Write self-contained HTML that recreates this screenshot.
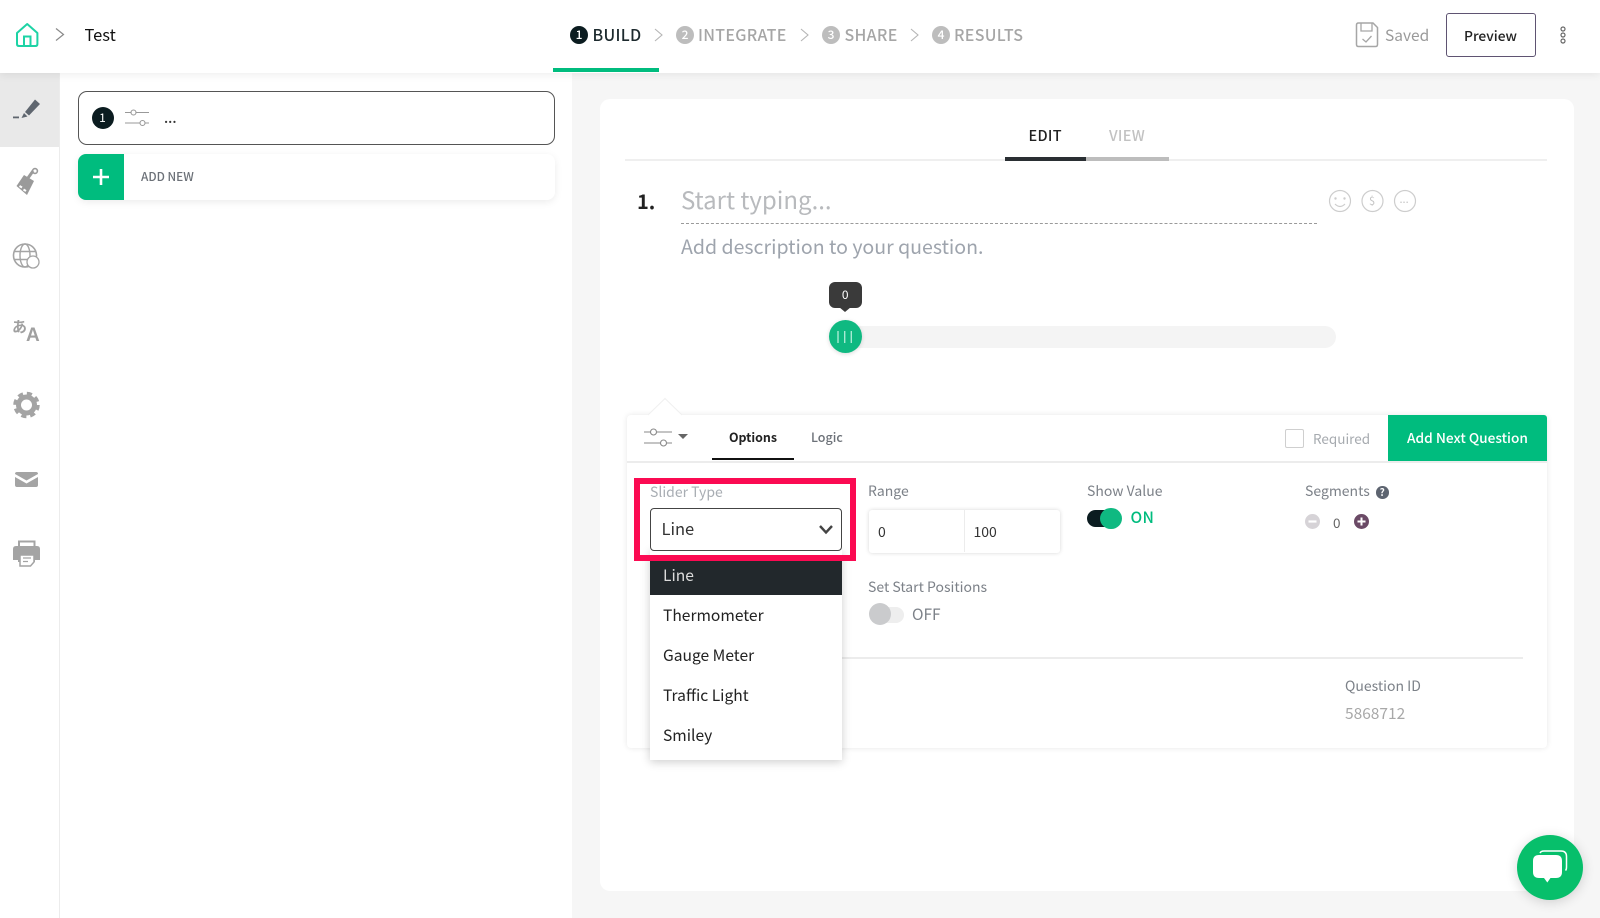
<!DOCTYPE html>
<html lang="en"><head><meta charset="utf-8"><title>Test</title>
<style>
html,body{margin:0;padding:0;width:1600px;height:918px;overflow:hidden;background:#f6f6f6;}
body{position:relative;font-family:"Noto Sans CJK JP","Liberation Sans",sans-serif;color:#222;}
.a{position:absolute;box-sizing:border-box;}
.t{position:absolute;white-space:nowrap;line-height:24px;height:24px;margin-top:-12px;}
svg{position:absolute;overflow:visible;}
.c{position:absolute;border-radius:50%;text-align:center;color:#fff;font-size:12px;font-weight:500;}
.n{font-size:16px;font-weight:500;letter-spacing:.3px;color:#a6a6a6;}
.l{font-size:14px;color:#7c8188;}
.o{font-size:15.600px;color:#222;}
</style></head><body>
<!-- panels -->
<div class="a" style="left:0;top:73px;width:572px;height:845px;background:#fff;"></div>
<div class="a" style="left:59px;top:73px;width:1px;height:845px;background:#ececec;"></div>
<div class="a" style="left:0;top:73px;width:59px;height:74px;background:#e9e9e9;"></div>
<!-- header -->
<div class="a" style="left:0;top:0;width:1600px;height:73px;background:#fff;box-shadow:0 2px 8px rgba(0,0,0,.07);"></div>
<svg style="left:0;top:0" width="70" height="60" viewBox="0 0 70 60" fill="none">
<path d="M17 33 L27.200 24 L37.400 33 V44 Q37.400 46 35.400 46 H19 Q17 46 17 44 Z" stroke="#1dd3a5" stroke-width="2" stroke-linejoin="round"/>
<path d="M24 46 V36.500 H30.500 V46" stroke="#1dd3a5" stroke-width="2"/>
<path d="M56 28.500 L63.500 34.500 L56 40.500" stroke="#8a8a8a" stroke-width="1.200"/>
</svg>
<div class="t" style="left:84.500px;top:34px;font-size:16.500px;color:#111;">Test</div>
<div class="a" style="left:553px;top:68px;width:106px;height:4px;background:#00bc7e;"></div>
<div class="c" style="left:570px;top:26px;width:18px;height:18px;line-height:17px;background:#0b1c20;">1</div>
<div class="t n" style="left:592.500px;top:34px;color:#1d2a2e;">BUILD</div>
<div class="c" style="left:676px;top:26px;width:18px;height:18px;line-height:17px;background:#bdbdbd;">2</div>
<div class="t n" style="left:698px;top:34px;">INTEGRATE</div>
<div class="c" style="left:822px;top:26px;width:18px;height:18px;line-height:17px;background:#bdbdbd;">3</div>
<div class="t n" style="left:844.500px;top:34px;">SHARE</div>
<div class="c" style="left:932px;top:26px;width:18px;height:18px;line-height:17px;background:#bdbdbd;">4</div>
<div class="t n" style="left:954px;top:34px;">RESULTS</div>
<svg style="left:0;top:0" width="1600" height="70" fill="none" stroke="#b5b5b5" stroke-width="1.100">
<path d="M655 29 L662 35 L655 41"/><path d="M801 29 L808 35 L801 41"/><path d="M911 29 L918 35 L911 41"/>
<path d="M1356.500 25 Q1356.500 23 1358.500 23 H1373 L1377.500 27.500 V44.500 Q1377.500 46.500 1375.500 46.500 H1358.500 Q1356.500 46.500 1356.500 44.500 Z" stroke="#a6a6a6" stroke-width="1.500"/>
<path d="M1361 23 V31 H1372 V23" stroke="#a6a6a6" stroke-width="1.300"/>
<path d="M1362.500 39 L1366 42 L1371.500 36" stroke="#a6a6a6" stroke-width="1.300"/>
<circle cx="1563" cy="29" r="2" stroke="#666" stroke-width="1.200"/><circle cx="1563" cy="35" r="2" stroke="#666" stroke-width="1.200"/><circle cx="1563" cy="41" r="2" stroke="#666" stroke-width="1.200"/>
</svg>
<div class="t" style="left:1385px;top:34.500px;font-size:15.500px;color:#9a9a9a;">Saved</div>
<div class="a" style="left:1445.500px;top:13px;width:90px;height:44px;border:1.500px solid #5f5472;border-radius:3px;background:#fff;text-align:center;font-size:13.800px;font-weight:500;line-height:42.500px;color:#222;">Preview</div>

<!-- sidebar icons -->
<svg style="left:0;top:73px" width="60" height="520" viewBox="0 73 60 520" fill="none">
<path d="M13 116.500 h6 v1.800 h-6z" fill="#5f666f"/><path d="M21.500 118 L24 113 L27.500 116.500 Z" fill="#5f666f"/>
<path d="M25 112 L35 99.500 L40 104 L29 115.500 Z" fill="#5f666f"/>
<path d="M16.500 186 L24 175 L34 181 L27 195 Z" fill="#9a9a9a"/>
<path d="M19.500 186 L22 187.500 M23.500 189.500 l2.500 1.500" stroke="#fff" stroke-width="2"/>
<path d="M28 178 L33 171" stroke="#9a9a9a" stroke-width="3"/><circle cx="35" cy="171" r="2.400" stroke="#9a9a9a" stroke-width="1.600"/>
<circle cx="25" cy="255.500" r="11.500" stroke="#a4a4a4" stroke-width="1.600"/><ellipse cx="25" cy="255.500" rx="5" ry="11.500" stroke="#a4a4a4" stroke-width="1.400"/>
<path d="M14 251.500 H36 M14 259.500 H36" stroke="#a4a4a4" stroke-width="1.400"/>
<circle cx="33" cy="262" r="6" fill="#fff" stroke="#a4a4a4" stroke-width="1.300"/>
<circle cx="26.500" cy="405" r="8" stroke="#a4a4a4" stroke-width="5"/>
<circle cx="26.500" cy="405" r="11" stroke="#a4a4a4" stroke-width="4.500" stroke-dasharray="4.900 3.740"/>
<path d="M15 474 Q15 472 17 472 H36 Q38 472 38 474 L26.500 480.500 Z" fill="#a4a4a4"/><path d="M15 477 L26.500 483.500 L38 477 V485 Q38 487 36 487 H17 Q15 487 15 485 Z" fill="#a4a4a4"/>
<path d="M19 547 V541.500 H34.500 V547" stroke="#a4a4a4" stroke-width="2"/>
<path d="M16 546 H37 Q40 546 40 549 V560 H35 V562 H18 V560 H13 V549 Q13 546 16 546 Z" fill="#a4a4a4"/>
<path d="M20 555 H34 V562 L30.500 566 H20 Z" fill="#fff" stroke="#a4a4a4" stroke-width="1.500"/><path d="M23 558 H31 M23 561.500 H28" stroke="#a4a4a4" stroke-width="1.300"/>
</svg>
<div class="t" style="left:12px;top:327px;font-size:15px;font-weight:700;color:#a0a0a0;">あ</div>
<div class="t" style="left:26px;top:335.500px;font-size:19px;font-weight:700;color:#a0a0a0;font-family:'Liberation Sans',sans-serif;">A</div>

<!-- left list -->
<div class="a" style="left:77.500px;top:90.500px;width:477px;height:54.500px;border:1.800px solid #555;border-radius:9px;background:#fff;"></div>
<div class="c" style="left:91.500px;top:107px;width:22px;height:22px;line-height:21px;background:#0b1c20;font-size:12px;font-weight:400;">1</div>
<svg style="left:125px;top:109px" width="26" height="18" fill="none" stroke="#999" stroke-width="1.100">
<path d="M0 3.500 H6 M11 3.500 H24 M0 14 H15 M20 14 H24"/><circle cx="8.500" cy="3.500" r="2.500"/><circle cx="17.500" cy="14" r="2.500"/>
</svg>
<div class="t" style="left:164px;top:117.500px;font-size:14px;color:#333;font-weight:500;">...</div>
<div class="a" style="left:77.500px;top:154px;width:477px;height:46px;background:#fff;border-radius:8px;box-shadow:0 2px 8px rgba(0,0,0,.08);"></div>
<div class="a" style="left:77.500px;top:154px;width:46px;height:46px;background:#00bc7e;border-radius:8px 0 0 8px;"></div>
<svg style="left:77.500px;top:154px" width="46" height="46"><path d="M23 15 V31 M15 23 H31" stroke="#fff" stroke-width="2.600"/></svg>
<div class="t" style="left:141px;top:176.500px;font-size:11.800px;font-weight:500;color:#6c7178;">ADD NEW</div>

<!-- main card -->
<div class="a" style="left:599.500px;top:99px;width:974px;height:792px;background:#fff;border-radius:10px;"></div>
<div class="t" style="left:1028.500px;top:136px;font-size:14.500px;font-weight:500;letter-spacing:.3px;color:#222;">EDIT</div>
<div class="t" style="left:1109px;top:136px;font-size:14.500px;font-weight:500;letter-spacing:.3px;color:#c2c2c2;">VIEW</div>
<div class="a" style="left:625px;top:159px;width:922px;height:1.500px;background:#efefef;"></div>
<div class="a" style="left:1004.500px;top:157px;width:81.500px;height:3.500px;background:#2a2f33;"></div>
<div class="a" style="left:1086px;top:157px;width:83px;height:3.500px;background:#bdbdbd;"></div>
<div class="t" style="left:637px;top:201px;font-size:20px;font-weight:700;color:#222;">1.</div>
<div class="t" style="left:681px;top:199px;font-size:24px;color:#b8babd;">Start typing...</div>
<div class="a" style="left:680.500px;top:223px;width:636.500px;height:0;border-top:1.500px dashed #9a9a9a;"></div>
<div class="t" style="left:681px;top:246px;font-size:19.550px;color:#9ea4ad;">Add description to your question.</div>
<svg style="left:0;top:0" width="1600" height="260" fill="none" stroke="#cdcdcd" stroke-width="1.200">
<circle cx="1340" cy="201" r="10.500"/><circle cx="1335.500" cy="198.500" r=".6" fill="#cdcdcd"/><circle cx="1344.500" cy="198.500" r=".6" fill="#cdcdcd"/><path d="M1335 204 Q1340 209 1345 204"/>
<circle cx="1372.500" cy="201" r="10.500"/><circle cx="1405" cy="201" r="10.500"/>
</svg>
<div class="t" style="left:1369px;top:200.500px;font-size:11px;color:#c4c4c4;">$</div>
<div class="t" style="left:1399.500px;top:199px;font-size:11px;color:#c4c4c4;">...</div>

<!-- slider -->
<div class="a" style="left:845px;top:326px;width:491px;height:22px;background:#f4f4f4;border-radius:0 11px 11px 0;"></div>
<div class="a" style="left:829px;top:281.500px;width:32.500px;height:26px;background:#3a3a3a;border-radius:6px;color:#fff;font-size:12px;text-align:center;line-height:25px;">0</div>
<svg style="left:839px;top:307px" width="12" height="6"><path d="M0 0 H12 L6 5 Z" fill="#3a3a3a"/></svg>
<div class="a" style="left:828.500px;top:320px;width:33px;height:33px;border-radius:50%;background:#0fb981;box-shadow:0 1px 4px rgba(0,0,0,.15);"></div>
<svg style="left:829px;top:320px" width="33" height="33"><path d="M9 11 V23 M15.700 11 V23 M22.300 11 V23" stroke="#a9ead3" stroke-width="1.400"/></svg>

<!-- options panel -->
<div class="a" style="left:627px;top:415px;width:920px;height:332.500px;background:#fff;border-radius:4px;box-shadow:0 0 6px rgba(0,0,0,.1);"></div>
<svg style="left:640px;top:396px" width="50" height="22"><path d="M7 19.500 L25 2 L43 19.500 Z" fill="#fff"/><path d="M8 19 L25 2.500 L42 19" fill="none" stroke="#f0f0f0"/></svg>
<div class="a" style="left:627px;top:461px;width:920px;height:1.500px;background:#ececec;"></div>
<svg style="left:644px;top:428px" width="46" height="20" fill="none" stroke="#888" stroke-width="1.100">
<path d="M0 4 H6 M13 4 H28 M0 15 H16 M23 15 H28"/><circle cx="9.500" cy="4" r="3"/><circle cx="19.500" cy="15" r="3"/>
<path d="M34 6 H44 L39 11 Z" fill="#666" stroke="none"/>
</svg>
<div class="t" style="left:729px;top:436.500px;font-size:12.400px;font-weight:700;color:#222;">Options</div>
<div class="a" style="left:712px;top:458px;width:82px;height:2px;background:#111;"></div>
<div class="t" style="left:811px;top:436.500px;font-size:12.500px;font-weight:500;color:#6c7178;">Logic</div>
<div class="a" style="left:1285px;top:429px;width:19px;height:19px;border:1.500px solid #cfcfcf;border-radius:2px;"></div>
<div class="t" style="left:1313px;top:438px;font-size:13.500px;color:#a6aaaf;">Required</div>
<div class="a" style="left:1388px;top:415px;width:159px;height:46px;background:#00bc7e;border-radius:0 3px 0 0;color:#fff;font-size:13.700px;font-weight:500;text-align:center;line-height:45px;">Add Next Question</div>

<div class="t l" style="left:868px;top:491px;">Range</div>
<div class="a" style="left:869px;top:509.500px;width:191px;height:43px;background:#fff;border-radius:3px;box-shadow:0 0 4px rgba(0,0,0,.16);"></div>
<div class="a" style="left:964px;top:510px;width:1px;height:42px;background:#ececec;"></div>
<div class="t" style="left:878px;top:532px;font-size:14px;color:#333;">0</div>
<div class="t" style="left:973.500px;top:532px;font-size:14px;color:#333;">100</div>

<div class="t l" style="left:1087px;top:491px;">Show Value</div>
<div class="a" style="left:1086.500px;top:510px;width:26px;height:17px;background:#0b1c20;border-radius:9px;"></div>
<div class="a" style="left:1100px;top:507.500px;width:22px;height:21.500px;background:#0fb981;border-radius:50%;"></div>
<div class="t" style="left:1130.500px;top:517px;font-size:15.500px;font-weight:500;letter-spacing:.3px;color:#00bc7e;">ON</div>

<div class="t l" style="left:1305px;top:491px;">Segments</div>
<div class="c" style="left:1376px;top:486px;width:12.500px;height:12.500px;line-height:12px;background:#5d6470;font-size:10px;font-weight:700;">?</div>
<svg style="left:1305px;top:514px" width="66" height="16"><circle cx="7.500" cy="7.500" r="7.500" fill="#d6d3d7"/><path d="M3.500 7.500 H11.500" stroke="#fff" stroke-width="2.200"/><circle cx="56.500" cy="7.500" r="7.500" fill="#6b4a66"/><path d="M52.500 7.500 H60.500 M56.500 3.500 V11.500" stroke="#fff" stroke-width="2"/></svg>
<div class="t" style="left:1333px;top:522px;font-size:13.500px;color:#666;">0</div>

<div class="t l" style="left:868px;top:587px;">Set Start Positions</div>
<div class="a" style="left:872px;top:606.500px;width:31.500px;height:16.500px;background:#eeeeee;border-radius:9px;"></div>
<div class="a" style="left:868.500px;top:603px;width:22px;height:22px;background:#cacbcd;border-radius:50%;"></div>
<div class="t" style="left:912px;top:613.500px;font-size:15.500px;color:#7c8188;">OFF</div>

<div class="a" style="left:650px;top:657px;width:873px;height:1.500px;background:#ececec;"></div>
<div class="t l" style="left:1345px;top:686px;">Question ID</div>
<div class="t" style="left:1345px;top:712.500px;font-size:15.500px;color:#a8a8a8;">5868712</div>

<!-- dropdown -->
<div class="a" style="left:650px;top:550px;width:192px;height:209.500px;background:#fff;box-shadow:0 2px 9px rgba(0,0,0,.2);"></div>
<div class="a" style="left:650px;top:560px;width:192px;height:34.500px;background:#22282c;"></div>
<div class="t o" style="left:663px;top:574.500px;color:#dcdcdc;">Line</div>
<div class="t o" style="left:663px;top:614.500px;">Thermometer</div>
<div class="t o" style="left:663px;top:654.500px;">Gauge Meter</div>
<div class="t o" style="left:663px;top:694.500px;">Traffic Light</div>
<div class="t o" style="left:663px;top:734.500px;">Smiley</div>

<!-- highlighted select -->
<div class="a" style="left:634px;top:477.500px;width:222px;height:83px;border:6px solid #fb0a52;"></div>
<div class="t" style="left:650px;top:492px;font-size:14px;color:#a8adb3;">Slider Type</div>
<div class="a" style="left:650px;top:507.500px;width:192px;height:43px;border:1.500px solid #444;border-radius:4px;background:#fff;"></div>
<div class="t" style="left:661.500px;top:528px;font-size:16.500px;color:#333;">Line</div>
<svg style="left:818px;top:524px" width="16" height="11"><path d="M2 2 L8 8.500 L14 2" fill="none" stroke="#444" stroke-width="2.400"/></svg>

<!-- chat -->
<div class="a" style="left:1517px;top:834.500px;width:66px;height:65px;border-radius:50%;background:#07bf6b;box-shadow:0 2px 12px rgba(0,0,0,.16);"></div>
<svg style="left:1517px;top:834px" width="66" height="66" fill="none">
<path d="M23 19 Q24 17 27 17 H44 Q49.500 17 49.500 22.500 V33 Q49.500 35.500 48.500 36.500" stroke="#fff" stroke-width="1.500"/>
<path d="M16 27 Q16 21 22 21 H39 Q45 21 45 27 V38 Q45 44 39 44 H33.500 L30.300 48.500 L27 44 H22 Q16 44 16 38 Z" fill="#fff"/>
</svg>
</body></html>
